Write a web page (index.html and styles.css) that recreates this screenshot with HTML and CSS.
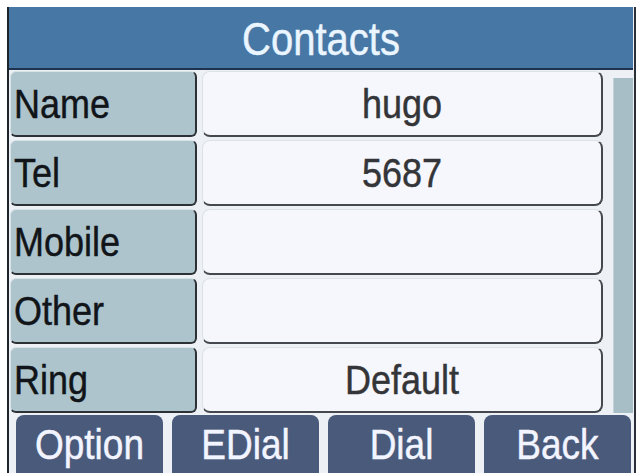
FILE: index.html
```html
<!DOCTYPE html>
<html>
<head>
<meta charset="utf-8">
<link rel="stylesheet" href="styles.css">
</head>
<body>
<div class="screen">
  <div class="header"><span class="txt">Contacts</span></div>
  <div class="main">
    <div class="rows">
      <div class="row"><div class="label"><span class="txt">Name</span></div><div class="value"><span class="txt">hugo</span></div></div>
      <div class="row"><div class="label"><span class="txt">Tel</span></div><div class="value"><span class="txt">5687</span></div></div>
      <div class="row"><div class="label"><span class="txt">Mobile</span></div><div class="value"></div></div>
      <div class="row"><div class="label"><span class="txt">Other</span></div><div class="value"></div></div>
      <div class="row"><div class="label"><span class="txt">Ring</span></div><div class="value"><span class="txt">Default</span></div></div>
    </div>
    <div class="scroll"></div>
  </div>
  <div class="keys">
    <div class="key"><span class="txt">Option</span></div>
    <div class="key"><span class="txt">EDial</span></div>
    <div class="key"><span class="txt">Dial</span></div>
    <div class="key"><span class="txt">Back</span></div>
  </div>
</div>
</body>
</html>
```
FILE: styles.css
```css
html, body {
  margin: 0;
  padding: 0;
  background: #ffffff;
  overflow: hidden;
}
body {
  font-family: "Liberation Sans", Arial, sans-serif;
}
.screen {
  margin: 7px 0 0 7px;
  width: 629px;
  height: 466px;
  box-sizing: border-box;
  border-left: 2px solid #1d232b;
  border-right: 2px solid #2b3038;
  background: #edf1f6;
  display: flex;
  flex-direction: column;
}
.txt {
  display: inline-block;
  transform: scaleY(1.15);
  line-height: 1;
  -webkit-text-stroke: 0.4px currentColor;
}
.header {
  height: 63px;
  box-sizing: border-box;
  border-bottom: 2px solid #1c324d;
  background: #4777a4;
  margin-right: 1px;
  padding-top: 3px;
  display: flex;
  align-items: center;
  justify-content: center;
  color: #eaf5ff;
  font-size: 40px;
}
.main {
  height: 345px;
  box-sizing: border-box;
  padding: 1px 1px 2px 1px;
  display: flex;
  gap: 10px;
}
.rows {
  width: 593px;
  display: flex;
  flex-direction: column;
  gap: 3px;
}
.row {
  height: 66px;
  display: flex;
  gap: 5px;
}
.label {
  width: 187px;
  box-sizing: border-box;
  background: #adc4cc;
  border: 1px solid #d7e2e6;
  border-right: 2px solid #2c3136;
  border-bottom: 2px solid #2c3136;
  border-radius: 6px;
  display: flex;
  align-items: center;
  padding-left: 3px;
  color: #111418;
  font-size: 36px;
}
.value {
  flex: 1;
  box-sizing: border-box;
  background: #f6f7fc;
  border: 1px solid #dde2e8;
  border-right: 2px solid #45494f;
  border-bottom: 2px solid #45494f;
  border-radius: 8px;
  display: flex;
  align-items: center;
  justify-content: center;
  color: #333538;
  font-size: 36px;
}
.scroll {
  width: 20px;
  margin-top: 7px;
  margin-bottom: 0;
  background: #a8bec6;
  border-left: 1px solid #c4d3d8;
  box-sizing: border-box;
}
.keys {
  flex: 1;
  display: flex;
  gap: 9px;
  padding-left: 7px;
}
.key {
  width: 147px;
  background: #4a5a7b;
  border-radius: 8px 8px 0 0;
  display: flex;
  align-items: center;
  justify-content: center;
  color: #f2f5ff;
  font-size: 37px;
}
```
